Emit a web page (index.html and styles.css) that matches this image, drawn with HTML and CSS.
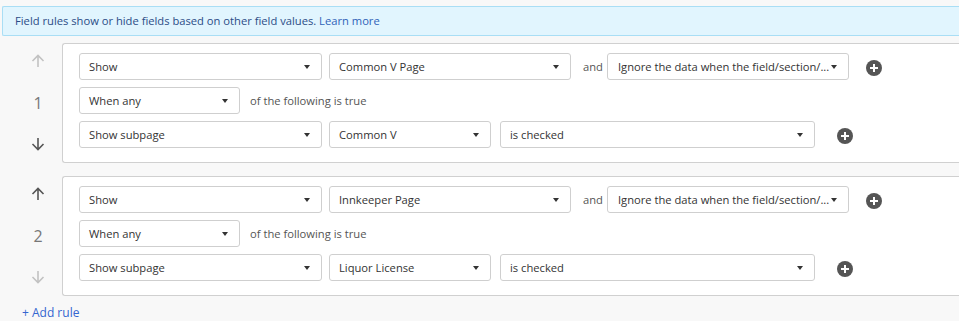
FILE: index.html
```html
<!DOCTYPE html>
<html>
<head>
<meta charset="utf-8">
<link rel="stylesheet" href="styles.css">
</head>
<body>
<div class="page">
  <div class="banner">Field rules show or hide fields based on other field values. <span class="link">Learn more</span></div>

  <div class="rule">
    <div class="mover">
      <svg class="arrow disabled" width="14" height="14" viewBox="0 0 14 14"><path d="M7 13V1.5M1.5 7L7 1.5L12.5 7" fill="none" stroke="currentColor" stroke-width="1.6"/></svg>
      <span class="num">1</span>
      <svg class="arrow" width="14" height="14" viewBox="0 0 14 14"><path d="M7 1V12.5M1.5 7L7 12.5L12.5 7" fill="none" stroke="currentColor" stroke-width="1.6"/></svg>
    </div>
    <div class="card">
      <div class="row">
        <div class="sel w243">Show<i class="caret"></i></div>
        <div class="sel w242">Common V Page<i class="caret"></i></div>
        <span class="and">and</span>
        <div class="sel w242 tight">Ignore the data when the field/section/...<i class="caret"></i></div>
        <span class="plus p1"></span>
      </div>
      <div class="row">
        <div class="sel w161">When any<i class="caret"></i></div>
        <span class="label">of the following is true</span>
      </div>
      <div class="row">
        <div class="sel w243">Show subpage<i class="caret"></i></div>
        <div class="sel w162">Common V<i class="caret"></i></div>
        <div class="sel w315 ml9">is checked<i class="caret"></i></div>
        <span class="plus p2"></span>
      </div>
    </div>
  </div>

  <div class="rule">
    <div class="mover">
      <svg class="arrow" width="14" height="14" viewBox="0 0 14 14"><path d="M7 13V1.5M1.5 7L7 1.5L12.5 7" fill="none" stroke="currentColor" stroke-width="1.6"/></svg>
      <span class="num">2</span>
      <svg class="arrow disabled" width="14" height="14" viewBox="0 0 14 14"><path d="M7 1V12.5M1.5 7L7 12.5L12.5 7" fill="none" stroke="currentColor" stroke-width="1.6"/></svg>
    </div>
    <div class="card">
      <div class="row">
        <div class="sel w243">Show<i class="caret"></i></div>
        <div class="sel w242">Innkeeper Page<i class="caret"></i></div>
        <span class="and">and</span>
        <div class="sel w242 tight">Ignore the data when the field/section/...<i class="caret"></i></div>
        <span class="plus p1"></span>
      </div>
      <div class="row">
        <div class="sel w161">When any<i class="caret"></i></div>
        <span class="label">of the following is true</span>
      </div>
      <div class="row">
        <div class="sel w243">Show subpage<i class="caret"></i></div>
        <div class="sel w162">Liquor License<i class="caret"></i></div>
        <div class="sel w315 ml9">is checked<i class="caret"></i></div>
        <span class="plus p2"></span>
      </div>
    </div>
  </div>

  <div class="add">+ Add rule</div>
</div>
</body>
</html>
```

FILE: styles.css
```css
html, body {
  margin: 0;
  padding: 0;
  background: #f8f8f8;
  overflow: hidden;
}
body {
  font-family: "Open Sans", "Liberation Sans", sans-serif;
  font-size: 11.2px;
  color: #333;
}
.page {
  width: 1000px;
  padding: 6px 0 0 2px;
}
.banner {
  height: 28px;
  line-height: 28px;
  background: #e1f5fe;
  border: 1px solid #a9def5;
  border-right: none;
  border-radius: 2px 0 0 2px;
  padding-left: 12px;
  color: #2b4c86;
}
.banner .link {
  color: #2f62b8;
}
.rule {
  display: flex;
  margin-top: 7px;
}
.rule + .rule {
  margin-top: 13px;
}
.mover {
  width: 32px;
  margin-left: 20px;
  margin-right: 8px;
  display: flex;
  flex-direction: column;
  align-items: center;
  justify-content: space-between;
  padding: 11px 0 12px;
}
.arrow {
  color: #555;
  display: block;
}
.arrow.disabled {
  color: #c2c2c2;
}
.num {
  font-size: 16px;
  color: #777;
  line-height: 20px;
}
.card {
  flex: 1;
  background: #fff;
  border: 1px solid #d0d0d0;
  border-right: none;
  border-radius: 3px 0 0 3px;
  padding: 9px 0 14px 16px;
  display: flex;
  flex-direction: column;
  gap: 7px;
}
.row {
  display: flex;
  align-items: center;
  height: 27px;
}
.sel {
  position: relative;
  box-sizing: border-box;
  height: 27px;
  line-height: 25px;
  border: 1px solid #cfcfcf;
  border-radius: 3px;
  background: #fff;
  padding-left: 9px;
  color: #333;
  white-space: nowrap;
  margin-right: 7px;
}
.sel.tight { padding-left: 10px; }
.caret {
  position: absolute;
  right: 11px;
  top: 11px;
  width: 0;
  height: 0;
  border-left: 3.5px solid transparent;
  border-right: 3.5px solid transparent;
  border-top: 4px solid #333;
}
.w243 { width: 243px; }
.w242 { width: 242px; }
.w161 { width: 161px; }
.w162 { width: 162px; }
.w315 { width: 315px; }
.ml9 { margin-left: 2px; }
.and {
  margin: 0 4px 0 5px;
  color: #555;
}
.label {
  margin-left: 3px;
  color: #555;
}
.plus {
  position: relative;
  width: 16px;
  height: 16px;
  border-radius: 50%;
  background: #555;
  display: inline-block;
}
.plus::before, .plus::after {
  content: "";
  position: absolute;
  background: #fff;
  left: 50%;
  top: 50%;
  transform: translate(-50%, -50%);
}
.plus::before { width: 8px; height: 2px; }
.plus::after { width: 2px; height: 8px; }
.p1 { margin-left: 10px; margin-top: 3px; }
.p2 { margin-left: 15px; margin-top: 3px; }
.add {
  margin: 8px 0 0 20px;
  color: #3466d0;
  font-size: 12px;
}
```
